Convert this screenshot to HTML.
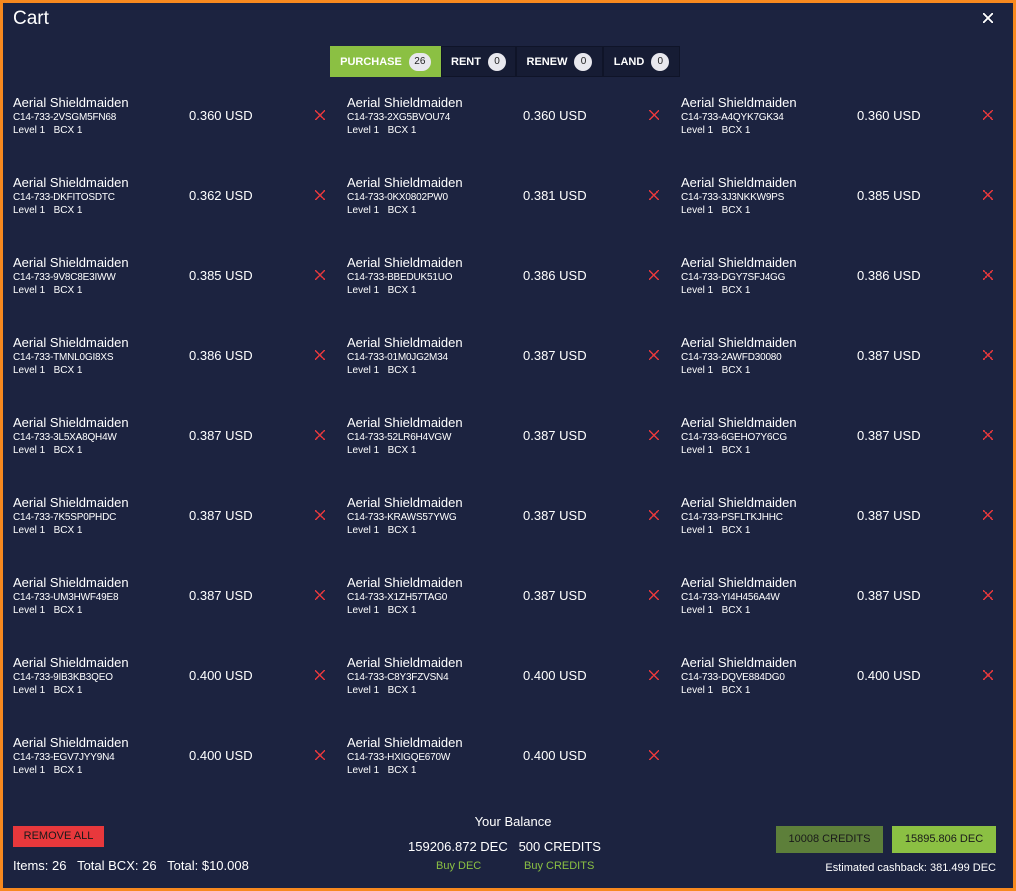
<!DOCTYPE html>
<html><head><meta charset="utf-8"><style>
*{margin:0;padding:0;box-sizing:border-box}
body{width:1016px;height:891px;background:#1c2340;font-family:"Liberation Sans",sans-serif;color:#fff;position:relative;overflow:hidden}
.frame{position:absolute;inset:0;border:3px solid #f7891f}
.t{position:absolute}
.tab{position:absolute;top:46px;height:31px;border:1px solid #0f1428;background:#161c34;font-size:11px;font-weight:bold;display:flex;align-items:center;justify-content:center;gap:7px}
.b{display:inline-block;width:18px;height:18px;border-radius:9px;background:#e8e8ee;color:#222;font-size:10px;font-weight:normal;text-align:center;line-height:18px}
.it{position:absolute;width:334px;height:60px}
.n{position:absolute;left:0;top:0;font-size:13px}
.c{position:absolute;left:0;top:17px;font-size:10px;letter-spacing:-0.2px}
.l{position:absolute;left:0;top:30px;font-size:10px}
.p{position:absolute;left:176px;top:13px;font-size:13px}
.x{position:absolute;left:302px;top:15px;width:10px;height:10px;background:linear-gradient(45deg,transparent 45%,#e8383c 45%,#e8383c 55%,transparent 55%),linear-gradient(-45deg,transparent 45%,#e8383c 45%,#e8383c 55%,transparent 55%)}
</style></head><body>
<div class="frame"></div>
<div class="t" style="left:13px;top:8px;font-size:19px">Cart</div>
<div class="t" style="left:983px;top:13px;width:10px;height:10px;background:linear-gradient(45deg,transparent 44%,#fff 44%,#fff 56%,transparent 56%),linear-gradient(-45deg,transparent 44%,#fff 44%,#fff 56%,transparent 56%)"></div>
<div class="tab" style="left:330px;width:111px;background:#8bc043;border-color:#8bc043">PURCHASE <span class="b" style="width:22px">26</span></div>
<div class="tab" style="left:441px;width:75px">RENT <span class="b">0</span></div>
<div class="tab" style="left:516px;width:87px">RENEW <span class="b">0</span></div>
<div class="tab" style="left:603px;width:77px">LAND <span class="b">0</span></div>

<div class="it" style="left:13px;top:95px"><div class="n">Aerial Shieldmaiden</div><div class="c">C14-733-2VSGM5FN68</div><div class="l">Level 1 &nbsp; BCX 1</div><div class="p">0.360 USD</div><div class="x"></div></div>
<div class="it" style="left:347px;top:95px"><div class="n">Aerial Shieldmaiden</div><div class="c">C14-733-2XG5BVOU74</div><div class="l">Level 1 &nbsp; BCX 1</div><div class="p">0.360 USD</div><div class="x"></div></div>
<div class="it" style="left:681px;top:95px"><div class="n">Aerial Shieldmaiden</div><div class="c">C14-733-A4QYK7GK34</div><div class="l">Level 1 &nbsp; BCX 1</div><div class="p">0.360 USD</div><div class="x"></div></div>

<div class="it" style="left:13px;top:175px"><div class="n">Aerial Shieldmaiden</div><div class="c">C14-733-DKFITOSDTC</div><div class="l">Level 1 &nbsp; BCX 1</div><div class="p">0.362 USD</div><div class="x"></div></div>
<div class="it" style="left:347px;top:175px"><div class="n">Aerial Shieldmaiden</div><div class="c">C14-733-0KX0802PW0</div><div class="l">Level 1 &nbsp; BCX 1</div><div class="p">0.381 USD</div><div class="x"></div></div>
<div class="it" style="left:681px;top:175px"><div class="n">Aerial Shieldmaiden</div><div class="c">C14-733-3J3NKKW9PS</div><div class="l">Level 1 &nbsp; BCX 1</div><div class="p">0.385 USD</div><div class="x"></div></div>

<div class="it" style="left:13px;top:255px"><div class="n">Aerial Shieldmaiden</div><div class="c">C14-733-9V8C8E3IWW</div><div class="l">Level 1 &nbsp; BCX 1</div><div class="p">0.385 USD</div><div class="x"></div></div>
<div class="it" style="left:347px;top:255px"><div class="n">Aerial Shieldmaiden</div><div class="c">C14-733-BBEDUK51UO</div><div class="l">Level 1 &nbsp; BCX 1</div><div class="p">0.386 USD</div><div class="x"></div></div>
<div class="it" style="left:681px;top:255px"><div class="n">Aerial Shieldmaiden</div><div class="c">C14-733-DGY7SFJ4GG</div><div class="l">Level 1 &nbsp; BCX 1</div><div class="p">0.386 USD</div><div class="x"></div></div>

<div class="it" style="left:13px;top:335px"><div class="n">Aerial Shieldmaiden</div><div class="c">C14-733-TMNL0GI8XS</div><div class="l">Level 1 &nbsp; BCX 1</div><div class="p">0.386 USD</div><div class="x"></div></div>
<div class="it" style="left:347px;top:335px"><div class="n">Aerial Shieldmaiden</div><div class="c">C14-733-01M0JG2M34</div><div class="l">Level 1 &nbsp; BCX 1</div><div class="p">0.387 USD</div><div class="x"></div></div>
<div class="it" style="left:681px;top:335px"><div class="n">Aerial Shieldmaiden</div><div class="c">C14-733-2AWFD30080</div><div class="l">Level 1 &nbsp; BCX 1</div><div class="p">0.387 USD</div><div class="x"></div></div>

<div class="it" style="left:13px;top:415px"><div class="n">Aerial Shieldmaiden</div><div class="c">C14-733-3L5XA8QH4W</div><div class="l">Level 1 &nbsp; BCX 1</div><div class="p">0.387 USD</div><div class="x"></div></div>
<div class="it" style="left:347px;top:415px"><div class="n">Aerial Shieldmaiden</div><div class="c">C14-733-52LR6H4VGW</div><div class="l">Level 1 &nbsp; BCX 1</div><div class="p">0.387 USD</div><div class="x"></div></div>
<div class="it" style="left:681px;top:415px"><div class="n">Aerial Shieldmaiden</div><div class="c">C14-733-6GEHO7Y6CG</div><div class="l">Level 1 &nbsp; BCX 1</div><div class="p">0.387 USD</div><div class="x"></div></div>

<div class="it" style="left:13px;top:495px"><div class="n">Aerial Shieldmaiden</div><div class="c">C14-733-7K5SP0PHDC</div><div class="l">Level 1 &nbsp; BCX 1</div><div class="p">0.387 USD</div><div class="x"></div></div>
<div class="it" style="left:347px;top:495px"><div class="n">Aerial Shieldmaiden</div><div class="c">C14-733-KRAWS57YWG</div><div class="l">Level 1 &nbsp; BCX 1</div><div class="p">0.387 USD</div><div class="x"></div></div>
<div class="it" style="left:681px;top:495px"><div class="n">Aerial Shieldmaiden</div><div class="c">C14-733-PSFLTKJHHC</div><div class="l">Level 1 &nbsp; BCX 1</div><div class="p">0.387 USD</div><div class="x"></div></div>

<div class="it" style="left:13px;top:575px"><div class="n">Aerial Shieldmaiden</div><div class="c">C14-733-UM3HWF49E8</div><div class="l">Level 1 &nbsp; BCX 1</div><div class="p">0.387 USD</div><div class="x"></div></div>
<div class="it" style="left:347px;top:575px"><div class="n">Aerial Shieldmaiden</div><div class="c">C14-733-X1ZH57TAG0</div><div class="l">Level 1 &nbsp; BCX 1</div><div class="p">0.387 USD</div><div class="x"></div></div>
<div class="it" style="left:681px;top:575px"><div class="n">Aerial Shieldmaiden</div><div class="c">C14-733-YI4H456A4W</div><div class="l">Level 1 &nbsp; BCX 1</div><div class="p">0.387 USD</div><div class="x"></div></div>

<div class="it" style="left:13px;top:655px"><div class="n">Aerial Shieldmaiden</div><div class="c">C14-733-9IB3KB3QEO</div><div class="l">Level 1 &nbsp; BCX 1</div><div class="p">0.400 USD</div><div class="x"></div></div>
<div class="it" style="left:347px;top:655px"><div class="n">Aerial Shieldmaiden</div><div class="c">C14-733-C8Y3FZVSN4</div><div class="l">Level 1 &nbsp; BCX 1</div><div class="p">0.400 USD</div><div class="x"></div></div>
<div class="it" style="left:681px;top:655px"><div class="n">Aerial Shieldmaiden</div><div class="c">C14-733-DQVE884DG0</div><div class="l">Level 1 &nbsp; BCX 1</div><div class="p">0.400 USD</div><div class="x"></div></div>

<div class="it" style="left:13px;top:735px"><div class="n">Aerial Shieldmaiden</div><div class="c">C14-733-EGV7JYY9N4</div><div class="l">Level 1 &nbsp; BCX 1</div><div class="p">0.400 USD</div><div class="x"></div></div>
<div class="it" style="left:347px;top:735px"><div class="n">Aerial Shieldmaiden</div><div class="c">C14-733-HXIGQE670W</div><div class="l">Level 1 &nbsp; BCX 1</div><div class="p">0.400 USD</div><div class="x"></div></div>

<div class="t" style="left:13px;top:826px;width:91px;height:21px;background:#e8383c;color:#1a1a1a;font-size:11px;text-align:center;line-height:21px">REMOVE ALL</div>
<div class="t" style="left:13px;top:858px;font-size:13px">Items: 26 &nbsp; Total BCX: 26 &nbsp; Total: $10.008</div>
<div class="t" style="left:0;width:1016px;top:814px;text-align:center;font-size:13px;padding-left:10px">Your Balance</div>
<div class="t" style="left:408px;top:839px;font-size:13px">159206.872 DEC &nbsp; 500 CREDITS</div>
<div class="t" style="left:436px;top:860px;font-size:11px;color:#8bc043">Buy DEC</div>
<div class="t" style="left:524px;top:860px;font-size:11px;color:#8bc043">Buy CREDITS</div>
<div class="t" style="left:776px;top:826px;width:107px;height:27px;background:#5d7f3a;color:#1a1a1a;font-size:11px;text-align:center;line-height:27px">10008 CREDITS</div>
<div class="t" style="left:892px;top:826px;width:104px;height:27px;background:#8bc043;color:#1a1a1a;font-size:11px;text-align:center;line-height:27px">15895.806 DEC</div>
<div class="t" style="right:20px;top:862px;font-size:11px">Estimated cashback: 381.499 DEC</div>
</body></html>
